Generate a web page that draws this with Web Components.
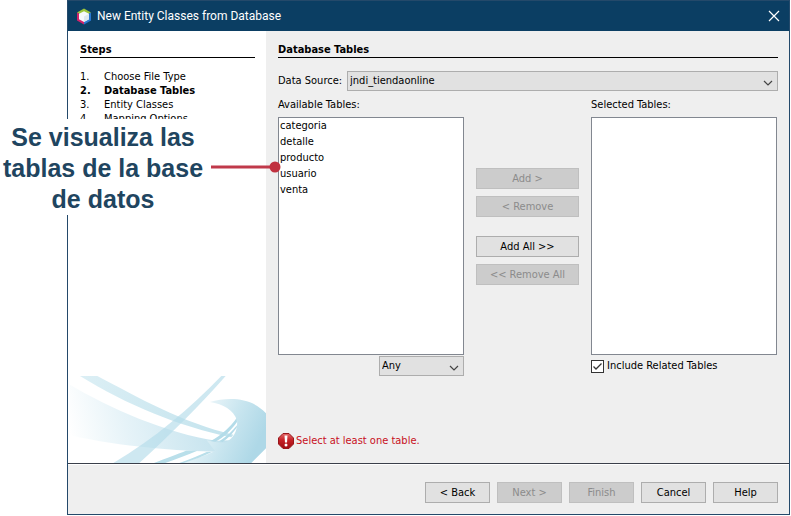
<!DOCTYPE html>
<html lang="en">
<head>
<meta charset="utf-8">
<title>New Entity Classes from Database</title>
<style>
  body { margin: 0; background: #fff; color: #000; font: 11px/14px "DejaVu Sans Condensed", "Noto Sans", sans-serif; }
</style>
</head>
<body>
<entity-wizard></entity-wizard>
<script>
const define = (name, html, setup) => {
  const template = document.createElement('template');
  template.innerHTML = '<style>*{box-sizing:border-box}</style>' + html;
  customElements.define(name, class extends HTMLElement {
    constructor() {
      super();
      this.attachShadow({ mode: 'open' }).append(template.content.cloneNode(true));
    }
    connectedCallback() { if (setup) setup(this, this.shadowRoot); }
  });
};
const fillOptions = (host, select) => {
  const names = (host.getAttribute('items') || '').split(',').filter(Boolean);
  select.replaceChildren(...names.map(n => new Option(n, n)));
};

define('push-button', `
<style>
  :host { display: block; }
  button { display: block; width: 100%; height: 21px; padding: 0; border: 1px solid #adadad; border-radius: 0;
    background: #e1e1e1; color: #000; font: inherit; line-height: 19px; text-align: center; }
  button:disabled { background: #ccc; border-color: #bfbfbf; color: #8b8b8b; }
</style>
<button type="button"><slot></slot></button>`, (host, root) => {
  root.querySelector('button').disabled = host.hasAttribute('disabled');
});

define('combo-box', `
<style>
  :host { display: flex; align-items: center; gap: 5px; }
  .field { flex: 1; display: grid; align-items: center; }
  select { grid-area: 1 / 1; width: 100%; height: 20px; padding: 0 20px 0 2px; appearance: none; border: 1px solid #adadad;
    border-radius: 0; background: #e1e1e1; color: #000; font: inherit; }
  svg { grid-area: 1 / 1; justify-self: end; margin-right: 5px; margin-top: 3px; pointer-events: none; }
  label:empty { display: none; }
</style>
<label for="s"></label>
<div class="field">
  <select id="s"></select>
  <svg width="10" height="6" viewBox="0 0 10 6" fill="none" stroke="#444" stroke-width="1.2"><path d="M1 1l4 4 4-4"/></svg>
</div>`, (host, root) => {
  const select = root.querySelector('select');
  root.querySelector('label').textContent = host.getAttribute('label') || '';
  if (host.hasAttribute('name')) select.setAttribute('aria-label', host.getAttribute('name'));
  fillOptions(host, select);
});

define('list-box', `
<style>
  :host { display: flex; flex-direction: column; gap: 5px; }
  select { flex: 1; width: 100%; min-height: 0; padding: 1px 0 0; border: 1px solid #828790; border-radius: 0; background: #fff;
    color: #000; font: inherit; overflow: hidden; outline: 0; }
  option { height: 16px; min-height: 16px; padding: 0 1px; line-height: 16px; }
</style>
<label for="l"></label>
<select id="l" multiple></select>`, (host, root) => {
  root.querySelector('label').textContent = host.getAttribute('label');
  fillOptions(host, root.querySelector('select'));
});

define('check-box', `
<style>
  :host { display: block; }
  label { display: flex; align-items: center; gap: 3px; }
  span { display: grid; }
  input { grid-area: 1 / 1; appearance: none; width: 13px; height: 13px; margin: 0; border: 1px solid #333; background: #fff; }
  svg { grid-area: 1 / 1; pointer-events: none; visibility: hidden; }
  input:checked + svg { visibility: visible; }
</style>
<label><span><input type="checkbox" checked><svg width="13" height="13" fill="none" stroke="#333" stroke-width="1.3"><path d="M2.5 6.5L5 9l5.500-5.500"/></svg></span><slot></slot></label>`);

define('section-title', `
<style>
  :host { display: block; }
  h2 { margin: 0; height: 15px; border-bottom: 1px solid #000; font-size: 11px; line-height: 14px; font-weight: bold; }
</style>
<h2><slot></slot></h2>`);

define('title-bar', `
<style>
  :host { display: flex; align-items: center; gap: 5px; height: 30px; padding: 0 9px 0 8px; background: #0b3e63; color: #fff; }
  h1 { flex: 1; margin: 0; font: 12px/16px Roboto, "Noto Sans", sans-serif; }
  button { display: grid; padding: 0; border: 0; background: none; color: inherit; }
</style>
<svg width="16" height="17" viewBox="0 0 16 17">
  <path d="M8 .5l7 4-7 4-7-4z" fill="#9cc53b"/>
  <path d="M1 4.500l7 4v8l-7-4z" fill="#d2226a"/>
  <path d="M15 4.500l-7 4v8l7-4z" fill="#2a78d0"/>
  <path d="M8 3.200l5 2.500v5.600l-5 2.700-5-2.700V5.700z" fill="#f6f9fb"/>
  <path d="M8 8.500l5-2.800v5.600l-5 2.700z" fill="#dde7ee"/>
</svg>
<h1><slot></slot></h1>
<button type="button" aria-label="Close"><svg width="12" height="12" fill="none" stroke="#fff" stroke-width="1.200"><path d="M1 1l10 10M11 1L1 11"/></svg></button>`);

define('wizard-steps', `
<style>
  :host { display: flex; flex-direction: column; background: #fff; }
  .body { flex: 1; padding: 12px 11px 0 12px; }
  ol { margin: 12px 0 0; padding: 0; list-style: none; counter-reset: step; }
  li { display: flex; counter-increment: step; }
  li::before { content: counter(step) "."; width: 24px; }
  li[aria-current] { font-weight: bold; }
  .art { display: block; width: 100%; }
</style>
<div class="body">
  <section-title>Steps</section-title>
  <ol><li>Choose File Type</li><li aria-current="step">Database Tables</li><li>Entity Classes</li><li>Mapping Options</li></ol>
</div>
<svg class="art" viewBox="24 48 594 261" aria-hidden="true">
  <defs>
    <linearGradient id="a" gradientUnits="userSpaceOnUse" x1="30" y1="230" x2="500" y2="120"><stop offset="0" stop-color="#fff"/><stop offset=".35" stop-color="#e6f3f8"/><stop offset="1" stop-color="#bfe0ec"/></linearGradient>
    <linearGradient id="b" gradientUnits="userSpaceOnUse" x1="450" y1="122" x2="618" y2="200"><stop offset="0" stop-color="#e8f4f8"/><stop offset=".5" stop-color="#c8e5ef"/><stop offset="1" stop-color="#aed8e7"/></linearGradient>
    <linearGradient id="c" gradientUnits="userSpaceOnUse" x1="60" y1="48" x2="520" y2="230"><stop offset="0" stop-color="#dceff5"/><stop offset="1" stop-color="#c3e3ed"/></linearGradient>
    <linearGradient id="d" gradientUnits="userSpaceOnUse" x1="490" y1="48" x2="200" y2="309"><stop offset="0" stop-color="#c6e4ee"/><stop offset="1" stop-color="#d4ebf3"/></linearGradient>
  </defs>
  <path d="M30 74C150 145 320 220 470 242L530 240L480 276C350 272 190 262 30 226z" fill="url(#a)"/>
  <path d="M60 48H112C230 110 370 190 520 224L514 232C360 200 200 135 60 48z" fill="url(#c)"/>
  <path d="M450 126C500 113 570 108 618 160V265L574 309H370C405 297 438 286 465 273L440 241C470 248 488 250 500 246C522 232 534 210 531 180C520 150 490 132 450 126z" fill="url(#b)"/>
  <path d="M484 48H497C420 135 330 225 238 309H160C285 235 390 145 484 48z" fill="#b4dce9" fill-opacity=".65"/>
  <path d="M282 309C320 294 350 283 378 272H412C380 285 350 297 316 309z" fill="#b9dfea"/>
  <path d="M358 309C390 298 415 287 440 276H456C430 288 400 300 372 309z" fill="#b9dfea"/>
  <path d="M452 243C485 225 510 202 530 174L531 186C514 210 492 232 466 245z" fill="#b4dce9"/>
  <path d="M478 244C500 230 517 214 531 196L530 203C518 220 504 235 488 246z" fill="#b4dce9"/>
</svg>`);

define('error-message', `
<style>:host { display: flex; align-items: center; gap: 2px; color: #c8101c; }</style>
<svg width="16" height="16" viewBox="0 0 16 16">
  <defs><linearGradient id="r" x2="0" y2="1"><stop stop-color="#e26a6a"/><stop offset=".45" stop-color="#c62026"/><stop offset="1" stop-color="#9f0c12"/></linearGradient></defs>
  <path d="M5 .5h6L15.500 5v6L11 15.500H5L.5 11V5z" fill="url(#r)" stroke="#97161b"/>
  <path d="M6.500 2.500h3L9 9.500H7z" fill="#fff"/><circle cx="8" cy="12" r="1.500" fill="#fff"/>
</svg>
<span role="alert"><slot></slot></span>`);

define('table-picker', `
<style>
  :host { display: flex; flex-direction: column; padding: 12px 11px 14px 12px; background: #efefef; }
  combo-box.source { margin-top: 13px; }
  .lists { flex: 1; display: grid; grid-template-columns: 1fr 103px 1fr; grid-template-rows: 1fr 20px; column-gap: 12px; row-gap: 1px; margin: 7px 1px 0 0; }
  .moves { display: grid; gap: 7px; align-content: start; padding-top: 70px; }
  .moves .all { margin-top: 12px; }
  .any { grid-area: 2 / 1; justify-self: end; width: 85px; }
  check-box { grid-area: 2 / 3; align-self: center; }
  error-message { margin-top: 57px; }
</style>
<section-title>Database Tables</section-title>
<combo-box class="source" label="Data Source:" items="jndi_tiendaonline"></combo-box>
<div class="lists">
  <list-box label="Available Tables:" items="categoria,detalle,producto,usuario,venta"></list-box>
  <div class="moves">
    <push-button disabled>Add &gt;</push-button>
    <push-button disabled>&lt; Remove</push-button>
    <push-button class="all">Add All &gt;&gt;</push-button>
    <push-button disabled>&lt;&lt; Remove All</push-button>
  </div>
  <list-box label="Selected Tables:" items=""></list-box>
  <combo-box class="any" name="Table filter" items="Any"></combo-box>
  <check-box>Include Related Tables</check-box>
</div>
<error-message>Select at least one table.</error-message>`);

define('wizard-footer', `
<style>
  :host { display: grid; grid-auto-flow: column; grid-auto-columns: 65px; justify-content: end; gap: 7px;
    padding: 18px 11px 11px; border-top: 1px solid #3a3f4a; background: #efefef; box-shadow: inset 0 1px #fff; }
</style>
<slot></slot>`);

define('callout-note', `
<style>
  :host { position: absolute; left: 0; top: 119px; display: flex; align-items: center; }
  p { margin: 0; width: 206px; padding: 3px 0 0; background: #fff; color: #1f4560; text-align: center; white-space: nowrap;
    font: bold 25px/31px "Liberation Sans", Arial, sans-serif; }
  svg { margin-left: 5px; }
</style>
<p><slot></slot></p>
<svg width="70" height="12" aria-hidden="true"><path d="M0 6h64" stroke="#c0394a" stroke-width="3"/><circle cx="64" cy="6" r="5.500" fill="#c0303f"/></svg>`);

define('entity-wizard', `
<style>
  :host { display: block; position: relative; padding: 0 1px 1px 67px; }
  .window { display: flex; flex-direction: column; min-height: calc(100vh - 1px); border: 1px solid #24496a; }
  .content { flex: 1; display: grid; grid-template-columns: 198px 1fr; }
</style>
<div class="window">
  <title-bar>New Entity Classes from Database</title-bar>
  <div class="content"><wizard-steps></wizard-steps><table-picker></table-picker></div>
  <wizard-footer>
    <push-button>&lt; Back</push-button><push-button disabled>Next &gt;</push-button><push-button disabled>Finish</push-button><push-button>Cancel</push-button><push-button>Help</push-button>
  </wizard-footer>
</div>
<callout-note>Se visualiza las<br>tablas de la base<br>de datos</callout-note>`);
</script>
</body>
</html>
